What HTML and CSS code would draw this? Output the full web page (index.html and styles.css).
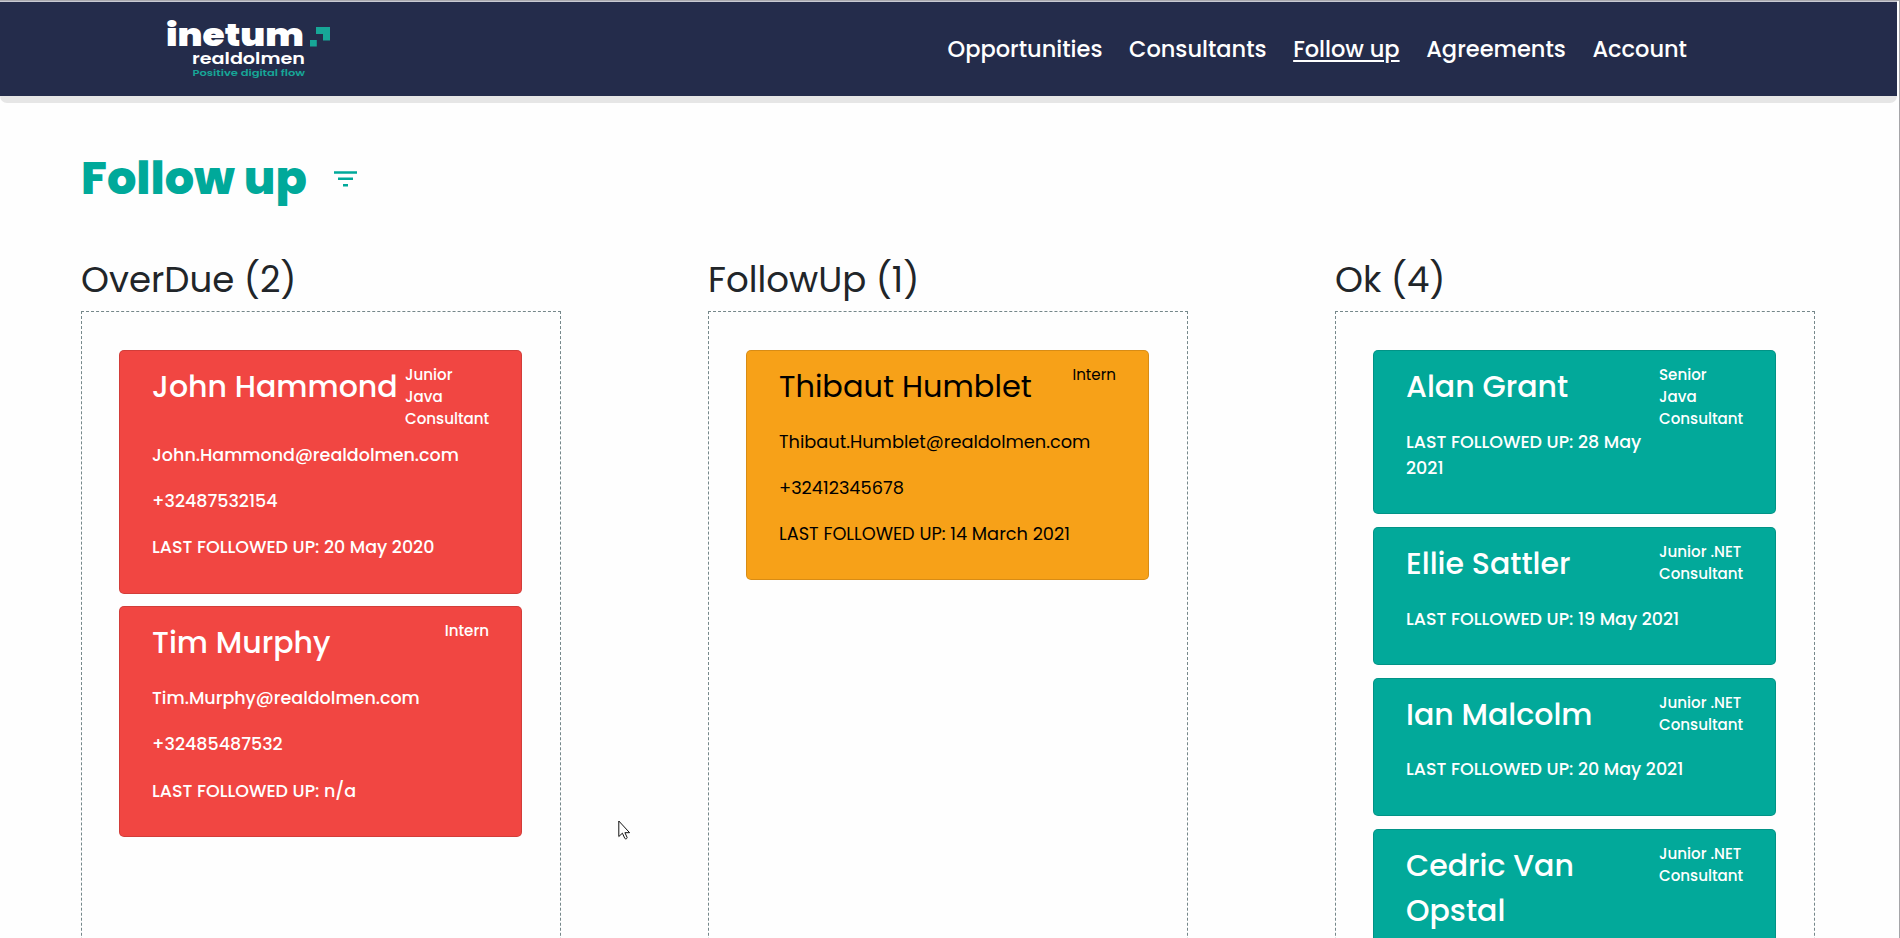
FILE: index.html
```html
<!DOCTYPE html>
<html lang="en">
<head>
<meta charset="utf-8">
<title>Follow up</title>
<link rel="stylesheet" href="styles.css">
</head>
<body>
<div class="window">
<div class="topbar-wrap">
<header class="topbar">
  <svg class="logo" width="170" height="64" viewBox="0 0 170 64" role="img" aria-label="inetum realdolmen">
    <text class="logo-main" x="5" y="29.3" textLength="138" lengthAdjust="spacingAndGlyphs">inetum</text>
    <text class="logo-sub" x="31" y="46.5" textLength="113" lengthAdjust="spacingAndGlyphs">realdolmen</text>
    <text class="logo-tag" x="31.5" y="59" textLength="112.5" lengthAdjust="spacingAndGlyphs">Positive digital flow</text>
    <path class="logo-mark" d="M155 10h14v13.500h-7v-6.500h-7zM149 23h6.800v6.500h-6.800z"/>
  </svg>
  <nav class="nav">
    <a>Opportunities</a>
    <a>Consultants</a>
    <a class="active">Follow up</a>
    <a>Agreements</a>
    <a>Account</a>
  </nav>
</header>
</div>
<main class="page">
  <div class="page-head">
    <h1 class="page-title">Follow up</h1>
    <svg class="filter" width="24" height="16" viewBox="0 0 24 16"><path d="M0 1.500h23M4 7.800h15M9 14.200h5"/></svg>
  </div>
  <div class="board">
    <section class="column">
      <h2 class="column-title">OverDue (2)</h2>
      <div class="lane">
        <article class="card red">
          <div class="role">Junior Java Consultant</div>
          <h3 class="name">John Hammond</h3>
          <p>John.Hammond@realdolmen.com</p>
          <p>+32487532154</p>
          <p>LAST FOLLOWED UP: 20 May 2020</p>
        </article>
        <article class="card red">
          <div class="role">Intern</div>
          <h3 class="name">Tim Murphy</h3>
          <p>Tim.Murphy@realdolmen.com</p>
          <p>+32485487532</p>
          <p>LAST FOLLOWED UP: n/a</p>
        </article>
      </div>
    </section>
    <section class="column">
      <h2 class="column-title">FollowUp (1)</h2>
      <div class="lane">
        <article class="card orange">
          <div class="role">Intern</div>
          <h3 class="name">Thibaut Humblet</h3>
          <p>Thibaut.Humblet@realdolmen.com</p>
          <p>+32412345678</p>
          <p>LAST FOLLOWED UP: 14 March 2021</p>
        </article>
      </div>
    </section>
    <section class="column">
      <h2 class="column-title">Ok (4)</h2>
      <div class="lane">
        <article class="card green">
          <div class="role">Senior Java Consultant</div>
          <h3 class="name">Alan Grant</h3>
          <p>LAST FOLLOWED UP: 28 May 2021</p>
        </article>
        <article class="card green">
          <div class="role">Junior .NET Consultant</div>
          <h3 class="name">Ellie Sattler</h3>
          <p>LAST FOLLOWED UP: 19 May 2021</p>
        </article>
        <article class="card green">
          <div class="role">Junior .NET Consultant</div>
          <h3 class="name">Ian Malcolm</h3>
          <p>LAST FOLLOWED UP: 20 May 2021</p>
        </article>
        <article class="card green">
          <div class="role">Junior .NET Consultant</div>
          <h3 class="name">Cedric Van Opstal</h3>
        </article>
      </div>
    </section>
  </div>
</main>
<svg class="cursor" width="13" height="20" viewBox="0 0 13 20"><path d="M.8 1v15.500l3.600-3.300 2.400 5.200c.8 1 2.600.2 2.300-1l-2.200-4.700h4.700z"/></svg>
</div>
</body>
</html>
```
FILE: styles.css
```css
* { box-sizing: border-box; }
body {
  margin: 0;
  background: #fefefe;
  color: #212529;
  font-family: Poppins, Inter, "Open Sans", sans-serif;
}
.window {
  position: relative;
  height: 938px;
  padding-right: 2px;
  overflow: hidden;
  border-top: 1px solid #a9a9ae;
  border-right: 1px solid #a5a5a8;
}
.topbar-wrap {
  padding-bottom: 7px;
  border-radius: 0 0 7px 7px;
  background: #e6e6e6;
}
.topbar {
  display: flex;
  justify-content: space-between;
  align-items: center;
  height: 95px;
  padding: 0 210px 0 161px;
  border-top: 1px solid #c9cad3;
  background: #242c4b;
}
.logo { margin-top: -1px; overflow: visible; }
.logo-main { font-size: 30.500px; font-weight: 900; fill: #fff; }
.logo-sub { font-size: 16px; font-weight: 600; fill: #fff; }
.logo-tag { font-size: 8.500px; font-weight: 600; fill: #17a697; }
.logo-mark { fill: #17a697; }
.nav {
  display: flex;
  gap: 26.600px;
  font-size: 22.500px;
  font-weight: 500;
  line-height: 36px;
  color: #fff;
}
.active { text-decoration: underline; text-underline-offset: 3px; text-decoration-thickness: 2px; }
.page { padding: 44px 81px 0; }
.page-head { display: flex; align-items: center; gap: 27px; height: 62px; }
.page-title {
  margin: 0;
  font-size: 46.200px;
  font-weight: 800;
  line-height: 62px;
  color: #00a99a;
}
.filter { margin-top: 2px; fill: none; stroke: #00a99a; stroke-width: 2.500; }
.board {
  display: grid;
  grid-template-columns: repeat(3, 480px);
  gap: 147px;
  margin-top: 45px;
}
.column-title {
  margin: 0 0 5px;
  font-size: 35.600px;
  font-weight: 400;
  line-height: 52px;
  white-space: nowrap;
}
.lane {
  display: flex;
  flex-direction: column;
  gap: 12.400px;
  height: 700px;
  padding: 38px 38px 0 37px;
  border: 1px dashed #75878a;
}
.card {
  flex: none;
  padding: 13px 32px 11.500px;
  border: 1px solid rgba(0, 0, 0, .125);
  border-radius: 5px;
  color: #fff;
  font-size: 17.500px;
  font-weight: 500;
}
.red { background: #f14642; }
.green { background: #02a99a; }
.orange { padding-bottom: 11px; background: #f7a118; color: #000; font-size: 17.780px; font-weight: 400; }
.card p { margin: 0 0 20.300px; line-height: 25.900px; }
.name {
  margin: 0 0 20.800px;
  font-size: 30px;
  font-weight: inherit;
  line-height: 45px;
}
.orange .name { margin-bottom: 20px; font-size: 30.400px; }
.role {
  float: right;
  max-width: 84px;
  margin-bottom: 12.800px;
  font-size: 15.100px;
  line-height: 22px;
}
.cursor { position: absolute; left: 618px; top: 819px; fill: #fff; stroke: #111; stroke-width: 1; }
```
